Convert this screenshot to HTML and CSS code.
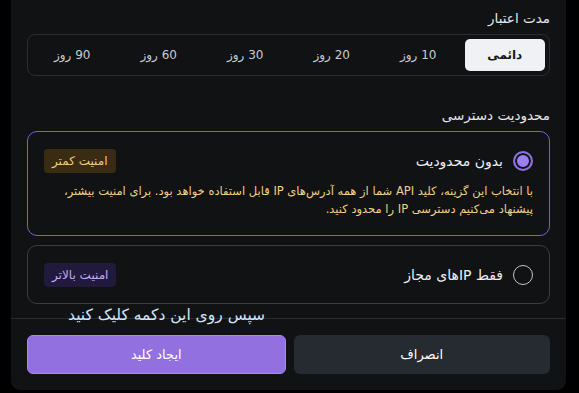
FILE: index.html
```html
<!DOCTYPE html>
<html lang="fa" dir="rtl">
<head>
    <meta charset="UTF-8">
    <meta name="viewport" content="width=device-width, initial-scale=1.0">
    <title>ایجاد کلید API</title>
    <link rel="stylesheet" href="styles.css">
</head>
<body>

<div class="panel">
    <div class="panel-body">
        <div class="section">
            <div class="section-title">مدت اعتبار</div>
            <div class="tabs">
                <button type="button" class="tab active">دائمی</button>
                <button type="button" class="tab">10 روز</button>
                <button type="button" class="tab">20 روز</button>
                <button type="button" class="tab">30 روز</button>
                <button type="button" class="tab">60 روز</button>
                <button type="button" class="tab">90 روز</button>
            </div>
        </div>

        <div class="section">
            <div class="section-title">محدودیت دسترسی</div>
            <div class="option selected">
                <div class="option-head">
                    <span class="radio checked"></span>
                    <span class="option-name">بدون محدودیت</span>
                    <span class="badge badge-warn">امنیت کمتر</span>
                </div>
                <p class="option-desc">با انتخاب این گزینه، کلید API شما از همه آدرس‌های IP قابل استفاده خواهد بود. برای امنیت بیشتر، پیشنهاد می‌کنیم دسترسی IP را محدود کنید.</p>
            </div>
            <div class="option">
                <div class="option-head">
                    <span class="radio"></span>
                    <span class="option-name">فقط IPهای مجاز</span>
                    <span class="badge badge-safe">امنیت بالاتر</span>
                </div>
            </div>
        </div>
    </div>

    <div class="panel-footer">
        <span class="hint">سپس روی این دکمه کلیک کنید</span>
        <button type="button" class="btn btn-cancel">انصراف</button>
        <button type="button" class="btn btn-primary">ایجاد کلید</button>
    </div>
</div>

</body>
</html>
```

FILE: styles.css
```css
* {
    box-sizing: border-box;
}
body {
    font-family: 'DejaVu Sans', 'Noto Sans', sans-serif;
    background-color: #000;
    margin: 0;
    padding: 0 13px 0 11px;
    height: 393px;
    overflow: hidden;
}
.panel {
    background-color: #111214;
    border-radius: 0 0 9px 9px;
    height: 390px;
    display: flex;
    flex-direction: column;
}
.panel-body {
    padding: 9px 16px 0;
    flex: 1;
}
.section-title {
    color: #e6e7ea;
    font-size: 13.5px;
    line-height: 18px;
    margin-bottom: 7px;
}
.section + .section {
    margin-top: 30px;
}
.tabs {
    display: grid;
    grid-template-columns: repeat(6, 1fr);
    gap: 6px;
    padding: 4px;
    border: 1px solid #2a2d33;
    border-radius: 8px;
    height: 42px;
}
.tab {
    font-family: inherit;
    background: none;
    border: none;
    border-radius: 5px;
    color: #c9cbd0;
    font-size: 12px;
    padding: 0;
}
.tab.active {
    background-color: #f0f1f4;
    color: #17181b;
    font-weight: bold;
}
.option {
    border: 1px solid #3a3d44;
    border-radius: 10px;
    padding: 15px 16px;
    margin-bottom: 9px;
}
.option.selected {
    border: 1.5px solid #7a5fd4;
    padding-bottom: 17px;
}
.option-head {
    display: flex;
    align-items: center;
    height: 27px;
}
.radio {
    width: 20px;
    height: 20px;
    border: 1.5px solid #c4c6cc;
    border-radius: 50%;
    margin-left: 10px;
}
.radio.checked {
    border: 2px solid #8a6fe4;
    background-color: #9b7ff0;
    box-shadow: inset 0 0 0 2px #111214;
}
.option-name {
    color: #eceef1;
    font-size: 14px;
}
.badge {
    margin-right: auto;
    height: 24px;
    padding: 0 8px;
    border-radius: 4px;
    font-size: 12px;
    display: flex;
    align-items: center;
}
.badge-warn {
    background-color: #3a2c12;
    color: #f0cc7e;
}
.badge-safe {
    background-color: #221a3c;
    color: #c3aaf2;
}
.option-desc {
    margin: 8px 0 0;
    color: #f3d084;
    font-size: 11.5px;
    line-height: 18px;
}
.panel-footer {
    position: relative;
    border-top: 1px solid #2a2e33;
    padding: 16px 16px 16px;
    display: flex;
    gap: 8px;
}
.btn {
    flex: 1;
    height: 39px;
    font-family: inherit;
    font-size: 13px;
    color: #fff;
    border: none;
    border-radius: 6px;
}
.btn-cancel {
    background-color: #262a31;
}
.btn-primary {
    background-color: #9370e0;
    border: 1px solid #a58af0;
}
.hint {
    position: absolute;
    left: 57px;
    top: -13px;
    color: #d4e6ff;
    font-size: 15.5px;
}
```
